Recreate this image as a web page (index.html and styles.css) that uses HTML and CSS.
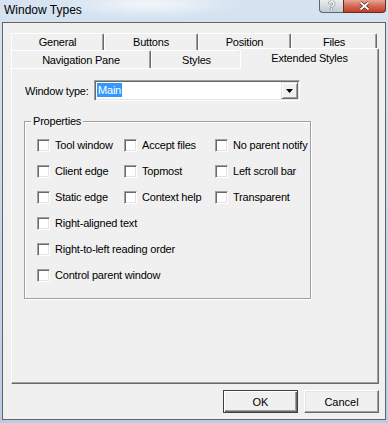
FILE: index.html
```html
<!DOCTYPE html>
<html lang="en">
<head>
    <meta charset="UTF-8">
    <meta name="viewport" content="width=device-width, initial-scale=1.0">
    <title>Window Types</title>
    <link rel="stylesheet" href="styles.css">
</head>
<body>
    <div class="window">
        <div class="titlebar">
            <span class="title">Window Types</span>
            <div class="caption-buttons">
                <span class="cap-btn help">?</span>
                <span class="cap-btn close">
                    <svg width="11" height="10" viewBox="0 0 11 10">
                        <path d="M1.5 1.5 L9.5 8.5 M9.5 1.5 L1.5 8.5" stroke="#5a2418" stroke-width="3.2" fill="none"/>
                        <path d="M1.5 1.5 L9.5 8.5 M9.5 1.5 L1.5 8.5" stroke="#ffffff" stroke-width="1.8" fill="none"/>
                    </svg>
                </span>
            </div>
        </div>

        <div class="client">
            <div class="tabs">
                <div class="tab-row back">
                    <div class="tab">General</div>
                    <div class="tab">Buttons</div>
                    <div class="tab">Position</div>
                    <div class="tab">Files</div>
                </div>
                <div class="tab-row front">
                    <div class="tab">Navigation Pane</div>
                    <div class="tab">Styles</div>
                    <div class="tab active">Extended Styles</div>
                </div>

                <div class="tab-panel">
                    <div class="field">
                        <label for="window-type">Window type:</label>
                        <div class="combo" id="window-type">
                            <span class="combo-value"><span class="sel">Main</span></span>
                            <span class="combo-btn">
                                <svg width="7" height="4" viewBox="0 0 7 4"><path d="M0 0 H7 L3.5 4 Z" fill="#000"/></svg>
                            </span>
                        </div>
                    </div>

                    <fieldset class="group">
                        <legend>Properties</legend>
                        <div class="checks">
                            <label class="check"><span class="box"></span>Tool window</label>
                            <label class="check"><span class="box"></span>Accept files</label>
                            <label class="check"><span class="box"></span>No parent notify</label>
                            <label class="check"><span class="box"></span>Client edge</label>
                            <label class="check"><span class="box"></span>Topmost</label>
                            <label class="check"><span class="box"></span>Left scroll bar</label>
                            <label class="check"><span class="box"></span>Static edge</label>
                            <label class="check"><span class="box"></span>Context help</label>
                            <label class="check"><span class="box"></span>Transparent</label>
                            <label class="check wide"><span class="box"></span>Right-aligned text</label>
                            <label class="check wide"><span class="box"></span>Right-to-left reading order</label>
                            <label class="check wide"><span class="box"></span>Control parent window</label>
                        </div>
                    </fieldset>
                </div>
            </div>

            <div class="footer">
                <button class="btn default">OK</button>
                <button class="btn">Cancel</button>
            </div>
        </div>
    </div>
</body>
</html>
```

FILE: styles.css
```css
body {
    margin: 0;
    font-family: "Liberation Sans", Arial, sans-serif;
    font-size: 11px;
    letter-spacing: -0.2px;
    color: #000;
    background:
        radial-gradient(ellipse 90px 14px at 150px 4px, rgba(255, 255, 255, 0.7), transparent),
        linear-gradient(to bottom, #d6e3f1 0%, #c5d7ea 50%, #b7cde5 100%);
}
.window {
    display: flex;
    flex-direction: column;
    width: 388px;
    height: 423px;
    padding: 0 2px 3px;
    box-sizing: border-box;
}

/* title bar */
.titlebar {
    display: flex;
    flex: none;
    height: 22px;
}
.title {
    padding: 3px 0 0 2px;
    font-size: 12px;
    line-height: 15px;
    letter-spacing: 0;
}
.caption-buttons {
    display: flex;
    margin-left: auto;
    height: 13px;
}
.cap-btn {
    display: flex;
    align-items: center;
    justify-content: center;
    box-sizing: border-box;
    height: 13px;
    border: 1px solid #5b6673;
    border-top: none;
}
.help {
    width: 24px;
    border-right: none;
    border-radius: 0 0 0 4px;
    background: linear-gradient(to bottom, #e9edf1, #c3cad3);
    color: #fff;
    font-size: 12px;
    font-weight: bold;
    line-height: 12px;
    text-shadow: 0 0 1px #3c4650, 0 0 1px #3c4650;
}
.close {
    width: 43px;
    border-color: #6b2a1e;
    border-radius: 0 0 4px 0;
    background: linear-gradient(to bottom, #e9a795, #d26a55 50%, #c23f26);
}

/* dialog body */
.client {
    flex: 1;
    display: flex;
    flex-direction: column;
    min-height: 0;
    background-color: #f0f0f0;
    border: 1px solid #646464;
    padding: 10px 6px 6px 8px;
}
.tabs {
    flex: 1;
    display: flex;
    flex-direction: column;
}
.tab-row {
    display: grid;
    padding-right: 2px;
}
.tab-row.back {
    grid-template-columns: 93px 94px 93px 86px;
    height: 17px;
}
.tab-row.front {
    grid-template-columns: 140px 91px 1fr;
    height: 18px;
}
.tab {
    border: 1px solid #fff;
    border-right-color: #696969;
    border-bottom: none;
    border-radius: 2px 2px 0 0;
    box-shadow: inset -1px 0 #a0a0a0;
    background-color: #f0f0f0;
    text-align: center;
    line-height: 16px;
    white-space: nowrap;
}
.front .tab {
    padding-top: 1px;
}
.tab.active {
    position: relative;
    z-index: 1;
    margin: -2px -2px -1px;
}
.tab-panel {
    flex: 1;
    border: 1px solid;
    border-color: #fff #696969 #696969 #fff;
    box-shadow: inset -1px -1px #a0a0a0;
    padding: 11px 12px;
}

/* window type combo */
.field {
    display: flex;
    align-items: center;
}
.field label {
    width: 70px;
    padding-left: 1px;
    box-sizing: border-box;
}
.combo {
    display: flex;
    width: 206px;
    height: 21px;
    box-sizing: border-box;
    border: 1px solid;
    border-color: #a0a0a0 #fff #fff #a0a0a0;
    box-shadow: inset 1px 1px #696969, inset -1px -1px #e3e3e3;
    background-color: #fff;
    padding: 1px;
}
.combo-value {
    flex: 1;
    padding: 1px 0 0 1px;
}
.sel {
    display: inline-block;
    padding: 0 1px;
    line-height: 14px;
    background-color: #3399ff;
    color: #fff;
}
.combo-btn {
    display: flex;
    align-items: center;
    justify-content: center;
    width: 17px;
    box-sizing: border-box;
    border: 1px solid;
    border-color: #e3e3e3 #696969 #696969 #e3e3e3;
    box-shadow: inset 1px 1px #fff, inset -1px -1px #a0a0a0;
    background-color: #f0f0f0;
}

/* properties group */
.group {
    width: 287px;
    min-inline-size: 0;
    box-sizing: border-box;
    margin: 14px 0 0;
    padding: 4px 0 10px 12px;
    border: 1px solid #a0a0a0;
    box-shadow: 1px 1px #fff, inset 1px 1px #fff;
}
.group legend {
    margin-left: -6px;
    padding: 0 2px;
    line-height: 13px;
    background-color: #f0f0f0;
}
.checks {
    display: grid;
    grid-template-columns: 87px 91px 1fr;
    grid-auto-rows: 26px;
}
.check {
    display: flex;
    align-items: center;
    gap: 5px;
    white-space: nowrap;
}
.check.wide {
    grid-column: 1 / -1;
}
.box {
    flex: none;
    width: 13px;
    height: 13px;
    box-sizing: border-box;
    border: 1px solid;
    border-color: #a0a0a0 #fff #fff #a0a0a0;
    box-shadow: inset 1px 1px #696969, inset -1px -1px #e3e3e3;
    background-color: #fff;
}

/* buttons */
.footer {
    display: flex;
    justify-content: flex-end;
    gap: 6px;
    margin-top: 6px;
}
.btn {
    width: 75px;
    height: 23px;
    margin: 0;
    padding: 0;
    font: inherit;
    color: #000;
    background-color: #f0f0f0;
    border: 1px solid;
    border-color: #fff #696969 #696969 #fff;
    box-shadow: inset -1px -1px #a0a0a0, inset 1px 1px #e3e3e3;
}
.btn.default {
    border-color: #404040;
    box-shadow: inset 1px 1px #fff, inset -1px -1px #696969, inset -2px -2px #a0a0a0;
}
```
